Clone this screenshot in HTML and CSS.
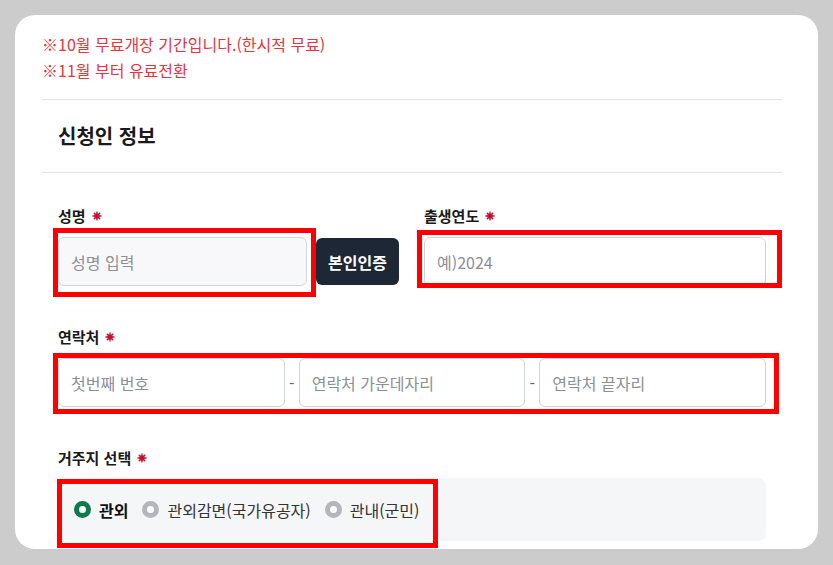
FILE: index.html
```html
<!DOCTYPE html>
<html lang="ko">
<head>
  <meta charset="UTF-8" />
  <meta name="viewport" content="width=device-width, initial-scale=1.0"/>
  <title>신청서</title>
  <link rel="stylesheet" href="styles.css">
</head>
<body>

  <div class="card">
    <div class="notice">
      <p>※10월 무료개장 기간입니다.(한시적 무료)</p>
      <p>※11월 부터 유료전환</p>
    </div>

    <div class="section-title">
      <h3>신청인 정보</h3>
    </div>

    <div class="form">
      <div class="row-2">
        <div class="field">
          <label>성명 <svg class="req" viewBox="0 0 10 10"><path d="M5 0.5V9.5M0.5 5H9.5M1.8 1.8L8.2 8.2M8.2 1.8L1.8 8.2"/><circle cx="5" cy="5" r="2"/></svg></label>
          <div class="name-line">
            <div class="mark mark-name">
              <input type="text" class="input input-gray" placeholder="성명 입력">
            </div>
            <button class="btn-auth">본인인증</button>
          </div>
        </div>
        <div class="field">
          <label>출생연도 <svg class="req" viewBox="0 0 10 10"><path d="M5 0.5V9.5M0.5 5H9.5M1.8 1.8L8.2 8.2M8.2 1.8L1.8 8.2"/><circle cx="5" cy="5" r="2"/></svg></label>
          <div class="mark mark-birth">
            <input type="text" class="input" placeholder="예)2024">
          </div>
        </div>
      </div>

      <div class="field">
        <label>연락처 <svg class="req" viewBox="0 0 10 10"><path d="M5 0.5V9.5M0.5 5H9.5M1.8 1.8L8.2 8.2M8.2 1.8L1.8 8.2"/><circle cx="5" cy="5" r="2"/></svg></label>
        <div class="mark mark-phone phone">
          <input type="text" class="input" placeholder="첫번째 번호">
          <span class="dash">-</span>
          <input type="text" class="input" placeholder="연락처 가운데자리">
          <span class="dash">-</span>
          <input type="text" class="input" placeholder="연락처 끝자리">
        </div>
      </div>

      <div class="field">
        <label>거주지 선택 <svg class="req" viewBox="0 0 10 10"><path d="M5 0.5V9.5M0.5 5H9.5M1.8 1.8L8.2 8.2M8.2 1.8L1.8 8.2"/><circle cx="5" cy="5" r="2"/></svg></label>
        <div class="radio-box">
          <div class="mark mark-radio radio-list">
            <span class="radio checked"><i></i>관외</span>
            <span class="radio"><i></i>관외감면(국가유공자)</span>
            <span class="radio"><i></i>관내(군민)</span>
          </div>
        </div>
      </div>
    </div>
  </div>

</body>
</html>
```

FILE: styles.css
```css
* {
  box-sizing: border-box;
  margin: 0;
  padding: 0;
  font-family: "Noto Sans CJK KR", "Noto Sans", sans-serif;
}

body {
  background-color: #cccccc;
  padding: 15px;
}

.card {
  width: 803px;
  height: 534px;
  background-color: #fff;
  border-radius: 20px;
  padding: 16px 36px 0 27px;
  overflow: hidden;
}

.notice {
  color: #e8353d;
  font-size: 16px;
  line-height: 26px;
  padding-bottom: 16px;
  border-bottom: 1px solid #e2e2e2;
}

.section-title {
  padding: 22px 16px;
  border-bottom: 1px solid #e2e2e2;
}

.section-title h3 {
  font-size: 20px;
  line-height: 28px;
  font-weight: 700;
  color: #1a1a1a;
}

.form {
  padding: 33px 16px 0 16px;
}

.row-2 {
  display: grid;
  grid-template-columns: 342px 342px;
  gap: 24px;
}

.field {
  margin-bottom: 41px;
}

.field label {
  display: flex;
  align-items: center;
  gap: 6px;
  font-size: 15px;
  font-weight: 700;
  line-height: 20px;
  color: #1a1a1a;
  margin-bottom: 11px;
}

.req {
  width: 10px;
  height: 10px;
  stroke: #c8102e;
  stroke-width: 1.3;
  fill: #c8102e;
}

.input {
  display: block;
  width: 100%;
  height: 49px;
  border: 1px solid #cfd4dc;
  border-radius: 6px;
  padding: 0 12px;
  font-size: 16px;
  background-color: #fff;
  color: #333;
}

.input::placeholder {
  color: #8b8f96;
}

.input-gray {
  background-color: #f8f8fa;
}

.name-line {
  display: flex;
  align-items: center;
  gap: 9px;
}

.name-line .mark {
  width: 249px;
}

.btn-auth {
  width: 83px;
  height: 47px;
  border: none;
  border-radius: 6px;
  background-color: #1e2736;
  color: #fff;
  font-size: 16px;
  font-weight: 700;
}

.phone {
  display: flex;
  align-items: center;
}

.phone .input {
  flex: 1;
}

.dash {
  width: 14px;
  text-align: center;
  color: #666;
  font-size: 16px;
}

.radio-box {
  height: 63px;
  margin-top: -1px;
  background-color: #f5f6f8;
  border-radius: 8px;
}

.radio-list {
  display: inline-flex;
  align-items: center;
  height: 63px;
  padding: 0 16px;
  gap: 14px;
  font-size: 16px;
  color: #333;
}

.radio {
  display: flex;
  align-items: center;
  gap: 8px;
}

.radio i {
  width: 17px;
  height: 17px;
  border-radius: 50%;
  border: 5px solid #b5b6bc;
  background-color: #fff;
}

.radio.checked {
  font-weight: 700;
  color: #111;
}

.radio.checked i {
  border-color: #0e7a4e;
}

/* 빨간 표시 박스 */
.mark {
  position: relative;
}

.mark::after {
  content: "";
  position: absolute;
  border: 5px solid #ff0000;
  pointer-events: none;
}

.mark-name::after {
  inset: -9px -9px -11px -5px;
}

.mark-birth::after {
  inset: -7px -16px -2px -7px;
}

.mark-phone::after {
  inset: -5px -13px -7px -5px;
}

.mark-radio::after {
  inset: 1px -3px -7px -1px;
}
```
